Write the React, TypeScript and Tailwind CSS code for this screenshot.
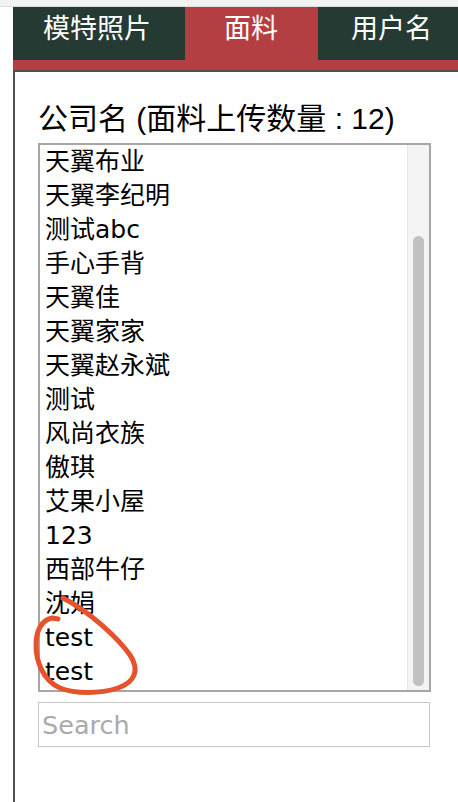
import React from "react";

// visible rows of the company list (scrolled to bottom)
const companies = [
  "天翼布业",
  "天翼李纪明",
  "测试abc",
  "手心手背",
  "天翼佳",
  "天翼家家",
  "天翼赵永斌",
  "测试",
  "风尚衣族",
  "傲琪",
  "艾果小屋",
  "123",
  "西部牛仔",
  "沈娟",
  "test",
  "test",
];

const tabs = [
  { label: "模特照片", active: false, w: "w-[172px]", pl: "pl-[30px]" },
  { label: "面料", active: true, w: "w-[133px]", pl: "pl-[39px]" },
  { label: "用户名", active: false, w: "w-[150px]", pl: "pl-[33px]" },
];

export default function App() {
  return (
    <div className="relative w-[458px] h-[802px] overflow-hidden bg-white">
      {/* top strip */}
      <div className="h-[7px] bg-[#f2f2f2] border-b border-[#dcdcdc]" />

      {/* tab bar */}
      <div className="ml-[13px] flex h-[53px] bg-[#253a32] overflow-hidden">
        {tabs.map((t) => (
          <div
            key={t.label}
            className={`${t.w} ${t.pl} shrink-0 pt-[2px] text-[27px] leading-[36px] text-white font-['Noto_Sans_CJK_SC',sans-serif] ${
              t.active ? "bg-[#b43f42]" : ""
            }`}
          >
            {t.label}
          </div>
        ))}
      </div>
      <div className="ml-[13px] h-[10px] bg-[#b43f42]" />

      {/* panel */}
      <div className="ml-[13px] h-[740px] border-l-2 border-t-2 border-[#4f4f4f] pl-[23px] pt-[28px]">
        <h2 className="text-[30px] leading-[38px] text-black font-['Liberation_Sans','Noto_Sans_CJK_SC',sans-serif]">
          公司名 (面料上传数量 : 12)
        </h2>

        <div className="mt-[5px] flex w-[393px] h-[549px] border-2 border-[#a6a6a6]">
          <ul className="flex-1 overflow-hidden pl-[5px] font-['DejaVu_Sans','Noto_Sans_CJK_SC',sans-serif] text-[25px] text-black">
            {companies.map((c, i) => (
              <li key={i} className="h-[34px] leading-[34px] whitespace-nowrap">
                {c}
              </li>
            ))}
          </ul>
          <div className="w-[22px] flex flex-col bg-[#f4f4f4] border-l border-[#e6e6e6] px-[5px] pb-[4px]">
            <div className="mt-auto h-[450px] rounded-full bg-[#c1c1c1]" />
          </div>
        </div>

        <input
          placeholder="Search"
          className="mt-[10px] block w-[392px] h-[45px] border border-[#c6c6c6] px-[3px] text-[25.5px] font-['DejaVu_Sans',sans-serif] placeholder:text-[#aaaaaa] outline-none"
        />
      </div>

      {/* hand-drawn annotation */}
      <svg
        className="absolute left-0 top-0 pointer-events-none"
        width="458"
        height="802"
        viewBox="0 0 458 802"
      >
        <path
          d="M63 598 C 90 612, 118 638, 130 655 C 140 670, 135 682, 118 688 C 100 694, 75 694, 60 688 C 42 680, 36 660, 36 645 C 36 630, 42 620, 52 618 L 58 619"
          fill="none"
          stroke="#e5532c"
          strokeWidth="5"
          strokeLinecap="round"
          strokeLinejoin="round"
        />
      </svg>
    </div>
  );
}
